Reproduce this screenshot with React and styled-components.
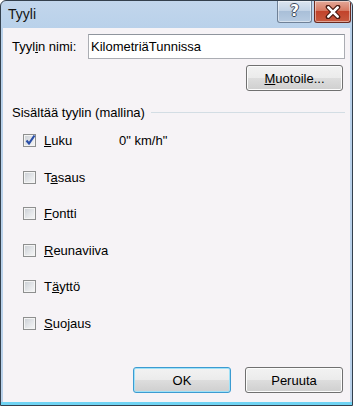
import React from "react"
import styled, { createGlobalStyle } from "styled-components"

const GlobalStyle = createGlobalStyle`
  html, body {
    margin: 0;
    padding: 0;
    background: #ffffff;
  }
  * {
    box-sizing: border-box;
  }
`

const Window = styled.div`
  width: 353px;
  height: 406px;
  border: 1px solid #34404d;
  border-radius: 6px 6px 0 0;
  background: linear-gradient(
    to bottom,
    #c2d6ec 0,
    #b9d1ea 28px,
    #b9d1ea calc(100% - 3px),
    #6fd3f3 calc(100% - 3px)
  );
  display: flex;
  flex-direction: column;
  overflow: hidden;
  font-family: "Liberation Sans", Arial, sans-serif;
  font-size: 13px;
  color: #000;
`

const TitleBar = styled.div`
  height: 27px;
  display: flex;
  align-items: flex-start;
  padding-left: 7px;
  flex-shrink: 0;
`

const TitleText = styled.div`
  font-size: 14px;
  line-height: 16px;
  padding-top: 5px;
  color: #141414;
`

const CaptionButtons = styled.div`
  margin-left: auto;
  margin-right: 1px;
  display: flex;
  gap: 2px;
`

const CaptionButton = styled.div`
  width: ${(p) => p.$w}px;
  height: 22px;
  border: 1px solid ${(p) => (p.$close ? "#6b2a20" : "#6f8197")};
  border-top: none;
  border-radius: 0 0 3px 3px;
  display: flex;
  align-items: center;
  justify-content: center;
  background: ${(p) =>
    p.$close
      ? "linear-gradient(to bottom, #e3a898 0%, #d77a63 45%, #c2432b 50%, #c85a3f 100%)"
      : "linear-gradient(to bottom, #dbe5f0 0%, #c4d4e6 45%, #a9bfd8 50%, #b7cbe1 100%)"};
  box-shadow: inset 0 0 0 1px rgba(255, 255, 255, 0.45);
`

const HelpGlyph = styled.span`
  font-family: "DejaVu Sans", sans-serif;
  font-weight: bold;
  font-size: 15px;
  line-height: 15px;
  color: #ffffff;
  text-shadow: -1px 0 #3d4a5c, 1px 0 #3d4a5c, 0 -1px #3d4a5c, 0 1px #3d4a5c;
`

const Client = styled.div`
  flex: 1;
  margin: 0 2px 3px 2px;
  background: #f6f3f6;
  display: flex;
  flex-direction: column;
  padding: 6px 5px 9px 9px;
`

const NameRow = styled.div`
  display: flex;
  align-items: center;
  height: 25px;
`

const Label = styled.div`
  width: 76px;
  flex-shrink: 0;
`

const TextInput = styled.div`
  flex: 1;
  height: 25px;
  border: 1px solid #abadb3;
  border-top-color: #8f959d;
  background: #ffffff;
  padding-left: 2px;
  display: flex;
  align-items: center;
`

const Button = styled.div`
  width: ${(p) => p.$w || 98}px;
  height: 26px;
  border: 1px solid ${(p) => (p.$default ? "#3c9bd1" : "#707070")};
  border-radius: 3px;
  background: linear-gradient(to bottom, #f2f2f2 0%, #ebebeb 50%, #dddddd 51%, #cfcfcf 100%);
  box-shadow: inset 0 0 0 1px ${(p) => (p.$default ? "#9fe1f7" : "#fcfcfc")};
  display: flex;
  align-items: center;
  justify-content: center;
`

const FormatButton = styled(Button)`
  align-self: flex-end;
  margin-top: 6px;
  margin-right: 2px;
`

const GroupHeader = styled.div`
  display: flex;
  align-items: center;
  margin-top: 14px;
  line-height: 15px;

  &::after {
    content: "";
    flex: 1;
    height: 1px;
    background: #d3dde4;
    margin-left: 6px;
    margin-right: 0;
  }
`

const CheckList = styled.div`
  display: flex;
  flex-direction: column;
  gap: 23.5px;
  margin-top: 14px;
  padding-left: 11px;
`

const CheckRow = styled.div`
  display: flex;
  align-items: center;
  height: 13px;
`

const Box = styled.div`
  width: 13px;
  height: 13px;
  flex-shrink: 0;
  border: 1px solid #8e8f8f;
  background: linear-gradient(135deg, #c9cdd3 0%, #e4e6e9 55%, #f7f7f7 100%);
  box-shadow: inset 0 0 0 1px #f4f4f4;
  position: relative;
`

const CheckMark = styled.svg`
  position: absolute;
  left: 0;
  top: -1px;
`

const CheckLabel = styled.div`
  margin-left: 8px;
  width: ${(p) => (p.$w ? `${p.$w}px` : "auto")};
`

const ButtonRow = styled.div`
  margin-top: auto;
  display: flex;
  justify-content: flex-end;
  gap: 14px;
  margin-right: 2px;
`

const CheckItem = ({ checked, children, value }) => (
  <CheckRow>
    <Box>
      {checked && (
        <CheckMark width="13" height="13" viewBox="0 0 13 13">
          <path d="M2.5 6.5 L5 9.5 L10.5 1.5" fill="none" stroke="#2b4fa8" strokeWidth="2.2" />
        </CheckMark>
      )}
    </Box>
    <CheckLabel $w={value ? 75 : 0}>{children}</CheckLabel>
    {value && <div>{value}</div>}
  </CheckRow>
)

const App = () => {
  return (
    <>
      <GlobalStyle />
      <Window>
        <TitleBar>
          <TitleText>Tyyli</TitleText>
          <CaptionButtons>
            <CaptionButton $w={35}>
              <HelpGlyph>?</HelpGlyph>
            </CaptionButton>
            <CaptionButton $w={37} $close>
              <svg width="16" height="14" viewBox="0 0 16 14">
                <path d="M3 2 L13 12 M13 2 L3 12" stroke="#4a1a12" strokeWidth="4.6" strokeLinecap="round" />
                <path d="M3.3 2.3 L12.7 11.7 M12.7 2.3 L3.3 11.7" stroke="#ffffff" strokeWidth="2.6" strokeLinecap="round" />
              </svg>
            </CaptionButton>
          </CaptionButtons>
        </TitleBar>

        <Client>
          <NameRow>
            <Label>
              Tyyl<u>i</u>n nimi:
            </Label>
            <TextInput>KilometriäTunnissa</TextInput>
          </NameRow>

          <FormatButton $w={97}>
            <span>
              <u>M</u>uotoile...
            </span>
          </FormatButton>

          <GroupHeader>Sisältää tyylin (mallina)</GroupHeader>

          <CheckList>
            <CheckItem checked value={'0" km/h"'}>
              <u>L</u>uku
            </CheckItem>
            <CheckItem>
              T<u>a</u>saus
            </CheckItem>
            <CheckItem>
              <u>F</u>ontti
            </CheckItem>
            <CheckItem>
              <u>R</u>eunaviiva
            </CheckItem>
            <CheckItem>
              T<u>ä</u>yttö
            </CheckItem>
            <CheckItem>
              <u>S</u>uojaus
            </CheckItem>
          </CheckList>

          <ButtonRow>
            <Button $default>OK</Button>
            <Button>Peruuta</Button>
          </ButtonRow>
        </Client>
      </Window>
    </>
  )
}

export default App
